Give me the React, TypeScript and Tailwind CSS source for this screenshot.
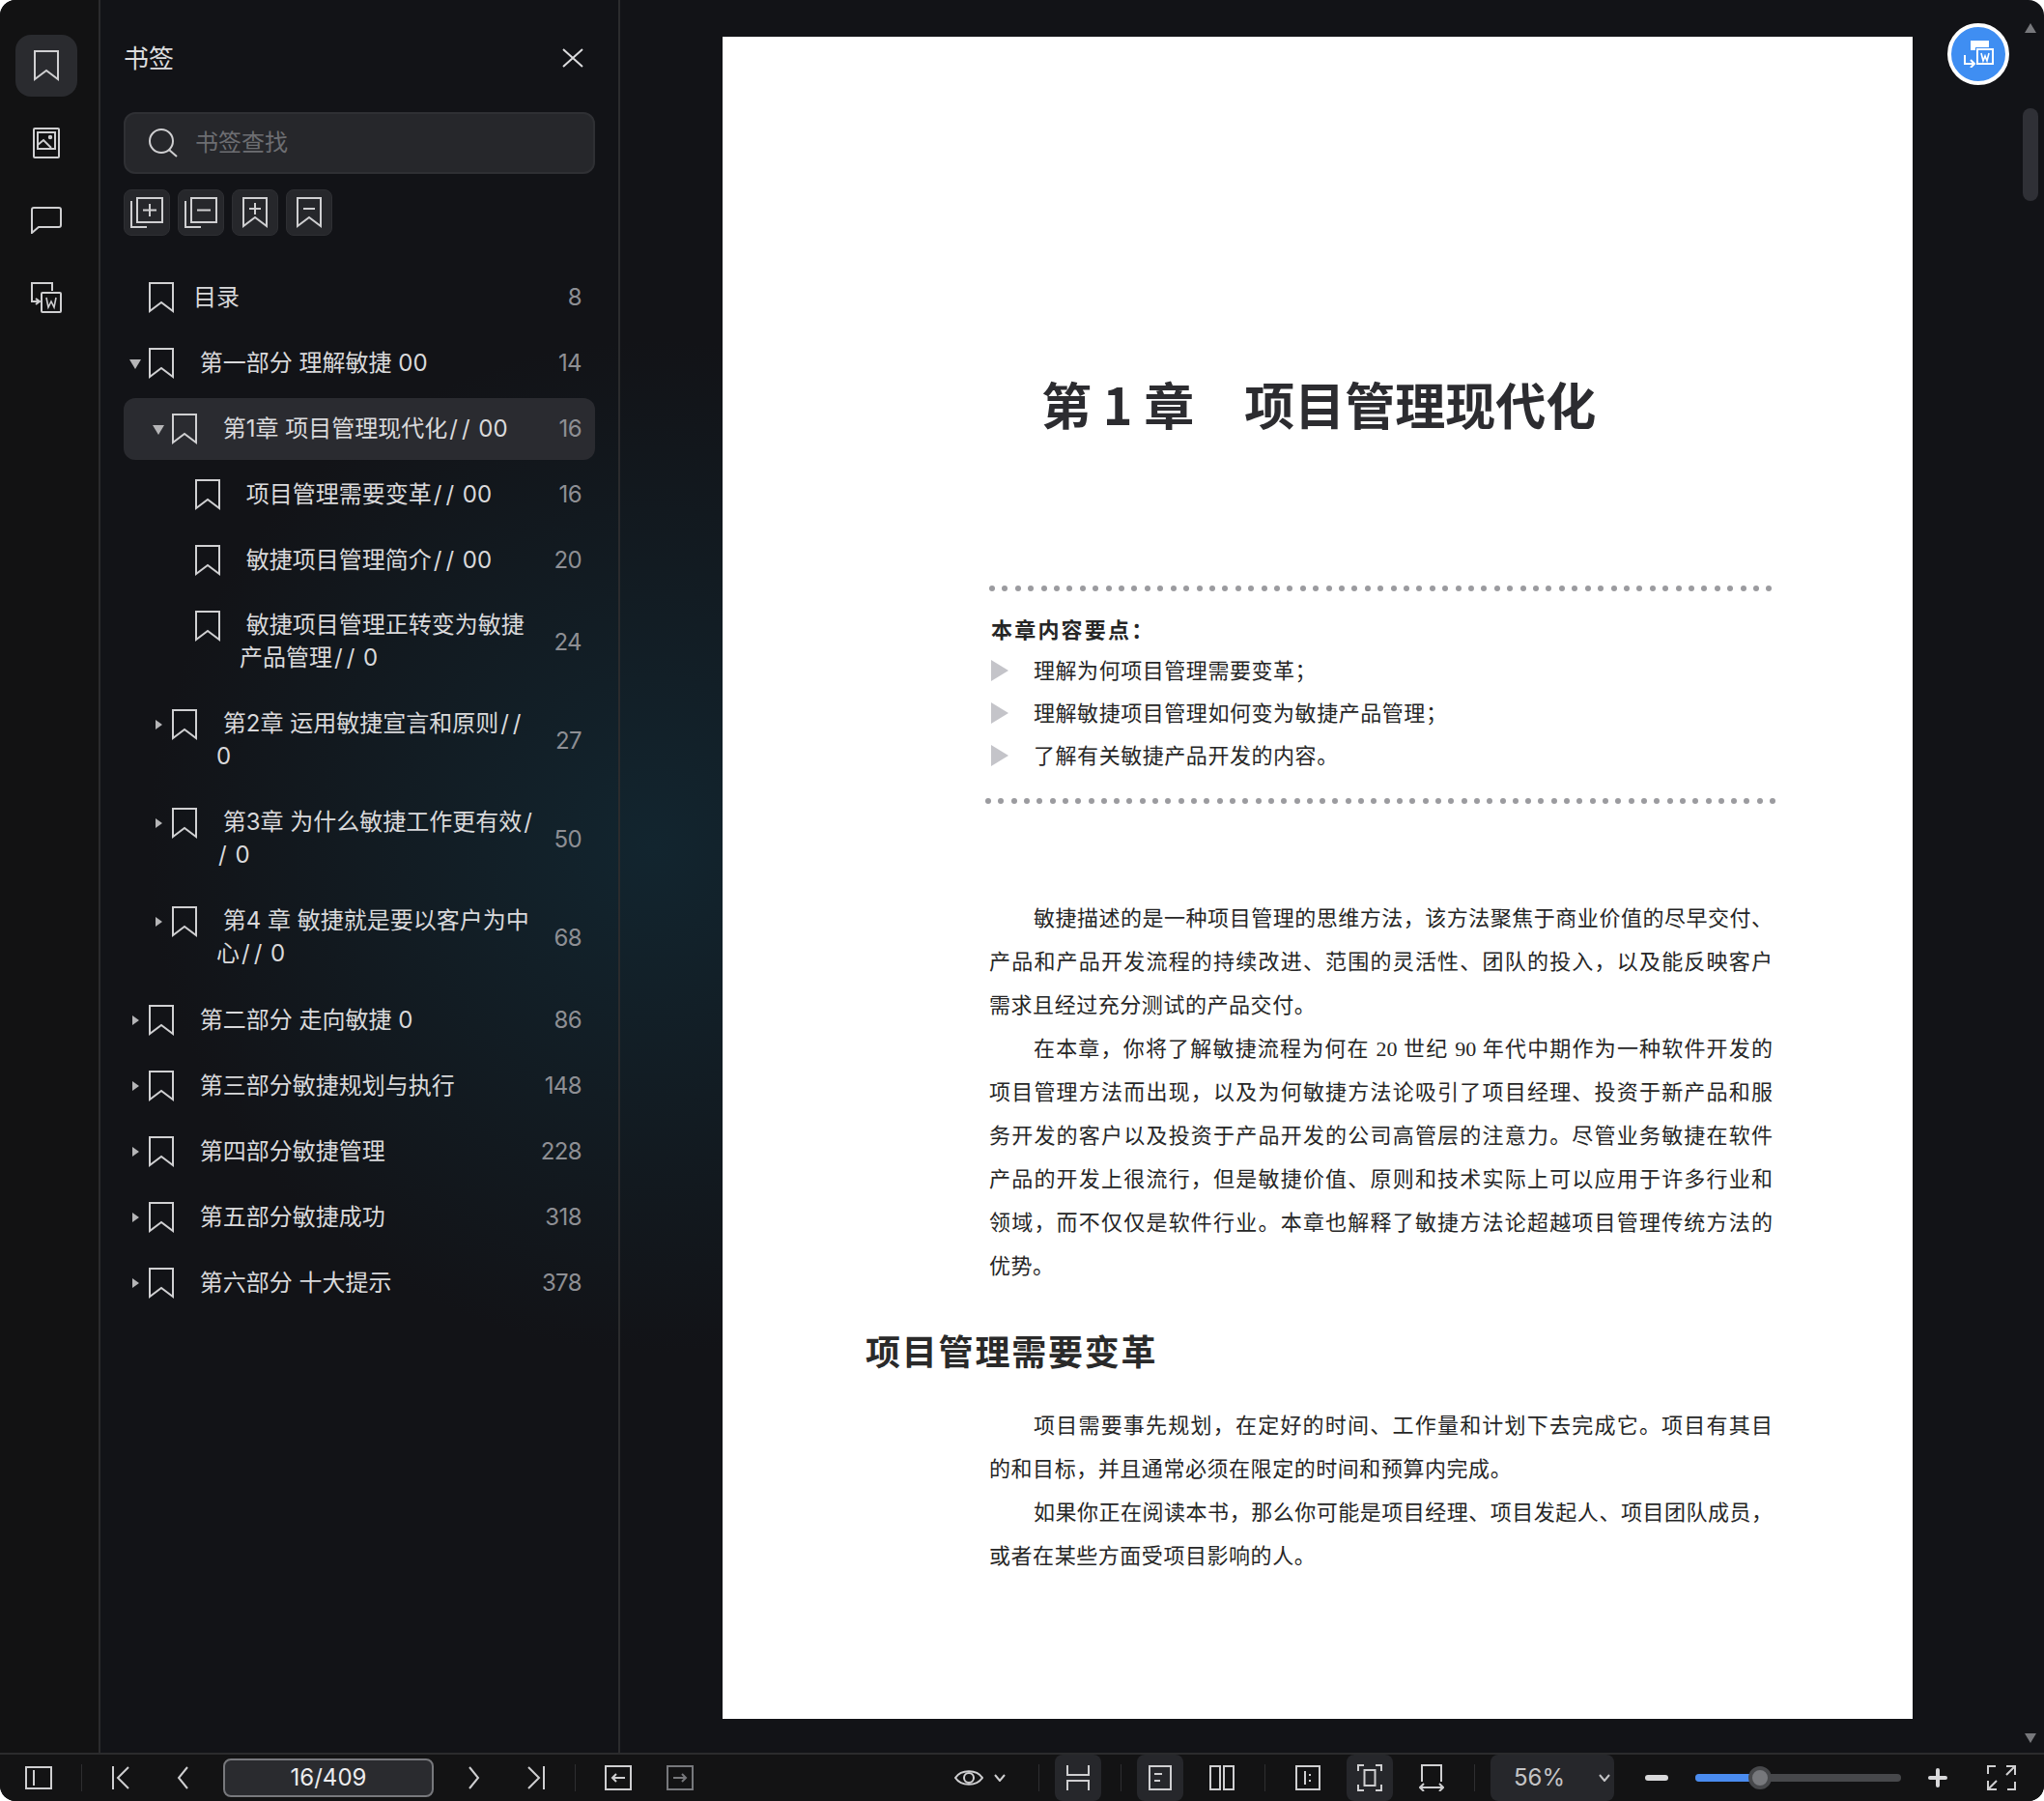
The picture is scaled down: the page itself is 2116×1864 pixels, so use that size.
import type { ReactNode } from "react";

type Row = {
  level: 0 | 1 | 2;
  caret?: "open" | "closed";
  text: string;
  page: string;
  selected?: boolean;
  multi?: boolean;
};

const ROWS: Row[] = [
  { level: 0, text: "目录", page: "8" },
  { level: 0, caret: "open", text: " 第一部分 理解敏捷 00", page: "14" },
  { level: 1, caret: "open", text: " 第1章 项目管理现代化// 00", page: "16", selected: true },
  { level: 2, text: " 项目管理需要变革// 00", page: "16" },
  { level: 2, text: " 敏捷项目管理简介// 00", page: "20" },
  { level: 2, text: " 敏捷项目管理正转变为敏捷\n产品管理// 0", page: "24", multi: true },
  { level: 1, caret: "closed", text: " 第2章 运用敏捷宣言和原则//\n0", page: "27", multi: true },
  { level: 1, caret: "closed", text: " 第3章 为什么敏捷工作更有效/\n/ 0", page: "50", multi: true },
  { level: 1, caret: "closed", text: " 第4 章 敏捷就是要以客户为中\n心// 0", page: "68", multi: true },
  { level: 0, caret: "closed", text: " 第二部分 走向敏捷 0", page: "86" },
  { level: 0, caret: "closed", text: " 第三部分敏捷规划与执行", page: "148" },
  { level: 0, caret: "closed", text: " 第四部分敏捷管理", page: "228" },
  { level: 0, caret: "closed", text: " 第五部分敏捷成功", page: "318" },
  { level: 0, caret: "closed", text: " 第六部分 十大提示", page: "378" },
];

const INDENT = ["pl-1.5", "pl-7.5", "pl-13.5"];

const PARA_ONE = [
  "敏捷描述的是一种项目管理的思维方法，该方法聚焦于商业价值的尽早交付、",
  "产品和产品开发流程的持续改进、范围的灵活性、团队的投入，以及能反映客户",
];
const PARA_TWO = [
  "在本章，你将了解敏捷流程为何在 20 世纪 90 年代中期作为一种软件开发的",
  "项目管理方法而出现，以及为何敏捷方法论吸引了项目经理、投资于新产品和服",
  "务开发的客户以及投资于产品开发的公司高管层的注意力。尽管业务敏捷在软件",
  "产品的开发上很流行，但是敏捷价值、原则和技术实际上可以应用于许多行业和",
  "领域，而不仅仅是软件行业。本章也解释了敏捷方法论超越项目管理传统方法的",
];

function Icon({ w, h, children, className }: { w: number; h: number; children: ReactNode; className?: string }) {
  return (
    <svg
      width={w}
      height={h}
      viewBox={`0 0 ${w} ${h}`}
      fill="none"
      stroke="currentColor"
      strokeWidth={2}
      className={className}
    >
      {children}
    </svg>
  );
}

function Bookmark({ w = 26, h = 32 }: { w?: number; h?: number }) {
  return (
    <Icon w={w} h={h} className="shrink-0 text-[#d0d0d2]">
      <path d={`M1 1H${w - 1}V${h - 2}L${w / 2} ${h - 11}L1 ${h - 2}Z`} />
    </Icon>
  );
}

function Caret({ open }: { open: boolean }) {
  return (
    <svg width={12} height={12} viewBox="0 0 12 12" className="shrink-0 text-[#b5b5b7]" fill="currentColor">
      {open ? <path d="M0 2H12L6 12Z" /> : <path d="M3 1L10 6L3 11Z" />}
    </svg>
  );
}

function Rail() {
  return (
    <aside className="flex w-[104px] shrink-0 flex-col gap-4 border-r-2 border-[#2b2b2d] bg-[#121213] pt-9 pl-4 text-[#cfcfd1]">
      <div className="flex h-16 w-16 items-center justify-center rounded-2xl bg-[#2a2b2f]">
        <Bookmark w={26} h={32} />
      </div>
      <div className="flex h-16 w-16 items-center justify-center">
        <Icon w={28} h={32}>
          <rect x="1" y="1" width="26" height="30" rx="1" />
          <rect x="5" y="5" width="18" height="17" />
          <path d="M5 18L11 13L19 21" />
          <circle cx="18" cy="10" r="1.2" />
        </Icon>
      </div>
      <div className="flex h-16 w-16 items-center justify-center">
        <Icon w={32} h={28}>
          <path d="M1 27V3Q1 1 3 1H29Q31 1 31 3V19Q31 21 29 21H8Z" />
        </Icon>
      </div>
      <div className="flex h-16 w-16 items-center justify-center">
        <Icon w={32} h={32}>
          <path d="M22 9V1H1V20H9M5 17L9 20L5 23" />
          <rect x="11" y="11" width="20" height="20" rx="1" />
          <path d="M16 16L18 26L21 20L24 26L26 16" strokeWidth={1.6} />
        </Icon>
      </div>
    </aside>
  );
}

function ToolButton({ children }: { children: ReactNode }) {
  return (
    <button className="flex h-12 w-12 items-center justify-center rounded-lg border border-[#2e2f33] bg-[#26272b] text-[#cfcfd1]">
      {children}
    </button>
  );
}

// one block per line; the slashes sit wider in the reference than in Inter
function RowText({ text }: { text: string }) {
  return (
    <>
      {text.split("\n").map((line, l) => (
        <span key={l} className="block">
          {line.split(/(\/)/).map((part, i) =>
            part === "/" ? (
              <span key={i} className="px-0.5">
                /
              </span>
            ) : (
              part
            ),
          )}
        </span>
      ))}
    </>
  );
}

function Sidebar() {
  return (
    <aside className="flex w-[538px] shrink-0 flex-col border-r-2 border-[#2b2b2d] pt-10 pr-6 pl-6">
      <header className="flex h-10 items-center justify-between">
        <h2 className="text-[26px] text-[#dcdcde]">书签</h2>
        <Icon w={22} h={20} className="mr-3 text-[#dcdcde]">
          <path d="M1 1L21 19M21 1L1 19" />
        </Icon>
      </header>
      <div className="mt-9 flex h-16 items-center rounded-xl border-2 border-[#2f3034] bg-[#26272b] pl-6">
        <Icon w={30} h={30} className="text-[#cfcfd1]">
          <circle cx="13" cy="13" r="12" />
          <path d="M21 22L29 29" />
        </Icon>
        <span className="ml-4.5 text-2xl text-[#6d6e72]">书签查找</span>
      </div>
      <div className="mt-4 flex gap-2">
        <ToolButton>
          <Icon w={34} h={32}>
            <rect x="7" y="1" width="26" height="25" />
            <path d="M1 4V31H17M20 7V20M13 13.5H27" />
          </Icon>
        </ToolButton>
        <ToolButton>
          <Icon w={34} h={32}>
            <rect x="7" y="1" width="26" height="25" />
            <path d="M1 4V31H17M13 13.5H27" />
          </Icon>
        </ToolButton>
        <ToolButton>
          <Icon w={26} h={32}>
            <path d="M1 1H25V30L13 21L1 30ZM13 6V18M7 12H19" />
          </Icon>
        </ToolButton>
        <ToolButton>
          <Icon w={26} h={32}>
            <path d="M1 1H25V30L13 21L1 30ZM7 12H19" />
          </Icon>
        </ToolButton>
      </div>
      <ul className="mt-8 flex flex-col gap-1">
        {ROWS.map((row) => (
          <li
            key={row.text}
            className={`flex text-2xl text-[#d9d9db] ${INDENT[row.level]} ${
              row.multi ? "items-start pt-4 pb-4" : "h-16 items-center"
            } ${row.selected ? "rounded-xl bg-[#2a2b30]" : ""}`}
          >
            <span className="mr-2 flex h-8 w-3 items-center">
              {row.caret && <Caret open={row.caret === "open"} />}
            </span>
            <Bookmark />
            <span
              className={`ml-5 flex-1 whitespace-pre-wrap ${row.multi ? "-mt-0.5 leading-[34px]" : "leading-8"}`}
            >
              <RowText text={row.text} />
            </span>
            <span className={`shrink-0 pr-3.5 tracking-tight text-[#8e8f94] ${row.multi ? "self-center" : ""}`}>
              {row.page}
            </span>
          </li>
        ))}
      </ul>
    </aside>
  );
}

function DotLine({ count, className }: { count: number; className?: string }) {
  return (
    <div className={`flex justify-between ${className ?? ""}`}>
      {Array.from({ length: count }, (_, i) => (
        <span key={i} className="size-1.5 rounded-full bg-[#9b9b9f]" />
      ))}
    </div>
  );
}

function Line({ children, indent }: { children: ReactNode; indent?: boolean }) {
  return (
    <p className={`text-justify [text-align-last:justify] ${indent ? "pl-11.5" : ""}`}>{children}</p>
  );
}

function Bullet({ children }: { children: ReactNode }) {
  return (
    <div className="flex h-11 items-center">
      <svg width={18} height={22} viewBox="0 0 18 22" className="ml-0.5 text-[#c4c4c9]" fill="currentColor">
        <path d="M0 0L18 11L0 22Z" />
      </svg>
      <span className="ml-6.5 tracking-wide">{children}</span>
    </div>
  );
}

function Page() {
  return (
    <article className="ml-[106px] mt-[38px] flex h-[1741px] w-[1232px] flex-col bg-white pt-84 pr-[145px] pl-[276px] font-['Liberation_Serif','Noto_Sans_CJK_SC',serif] text-[22px] leading-[45px] text-[#262626]">
      <h1 className="ml-[54px] flex h-22 items-center whitespace-pre font-['Noto_Sans_CJK_SC',sans-serif] text-[52px] leading-none font-bold text-[#2c2c30]">
        第 1 章<span className="ml-13">项目管理现代化</span>
      </h1>
      <DotLine count={61} className="mt-36" />
      <div className="mt-4 ml-0.5 flex h-11 items-center pt-1 font-bold tracking-widest">本章内容要点：</div>
      <Bullet>理解为何项目管理需要变革；</Bullet>
      <Bullet>理解敏捷项目管理如何变为敏捷产品管理；</Bullet>
      <Bullet>了解有关敏捷产品开发的内容。</Bullet>
      <DotLine count={62} className="mt-5.5 -mx-1" />
      <div className="mt-24">
        <Line indent>{PARA_ONE[0]}</Line>
        <Line>{PARA_ONE[1]}</Line>
        <p className="tracking-wide">需求且经过充分测试的产品交付。</p>
        <Line indent>{PARA_TWO[0]}</Line>
        <Line>{PARA_TWO[1]}</Line>
        <Line>{PARA_TWO[2]}</Line>
        <Line>{PARA_TWO[3]}</Line>
        <Line>{PARA_TWO[4]}</Line>
        <p className="tracking-wide">优势。</p>
      </div>
      <h2 className="-ml-32 mt-8 flex h-16 items-center font-['Noto_Sans_CJK_SC',sans-serif] text-4xl font-bold tracking-wider text-[#2a2a2a]">
        项目管理需要变革
      </h2>
      <div className="mt-6">
        <Line indent>项目需要事先规划，在定好的时间、工作量和计划下去完成它。项目有其目</Line>
        <p className="tracking-wide">的和目标，并且通常必须在限定的时间和预算内完成。</p>
        <Line indent>如果你正在阅读本书，那么你可能是项目经理、项目发起人、项目团队成员，</Line>
        <p className="tracking-wide">或者在某些方面受项目影响的人。</p>
      </div>
    </article>
  );
}

function Main() {
  return (
    <main className="relative flex-1">
      <Page />
      <button className="absolute top-6 right-9 flex size-16 items-center justify-center rounded-full border-4 border-white bg-[#3f8ef2]">
        <svg width={32} height={28} viewBox="0 0 32 28" fill="none" className="text-white">
          <path d="M8 0H27V7H13V10H8Z" fill="currentColor" />
          <rect x="15" y="9" width="16" height="15" stroke="currentColor" strokeWidth={2} />
          <path d="M19 13L21 21L23 16L25 21L27 13" stroke="currentColor" strokeWidth={1.6} />
          <path d="M2 15V24H11M8 20L12 24L8 28" stroke="currentColor" strokeWidth={2} />
        </svg>
      </button>
      <svg width={12} height={10} viewBox="0 0 12 10" className="absolute top-6 right-2 text-[#77787c]" fill="currentColor">
        <path d="M6 0L12 10H0Z" />
      </svg>
      <div className="absolute top-28 right-1.5 h-24 w-4 rounded-full bg-[#2f3036]" />
      <svg width={12} height={10} viewBox="0 0 12 10" className="absolute right-2 bottom-2.5 text-[#77787c]" fill="currentColor">
        <path d="M6 10L12 0H0Z" />
      </svg>
    </main>
  );
}

function Sep({ className }: { className?: string }) {
  return <span className={`h-7 w-px shrink-0 bg-[#2e2e30] ${className ?? ""}`} />;
}

function BarIcon({
  children,
  className,
  tile,
}: {
  children: ReactNode;
  className?: string;
  tile?: boolean;
}) {
  return (
    <div
      className={`flex h-full w-12 shrink-0 items-center justify-center rounded-lg ${
        tile ? "bg-[#26272b]" : ""
      } ${className ?? ""}`}
    >
      {children}
    </div>
  );
}

function BottomBar() {
  return (
    <footer className="flex h-[50px] shrink-0 items-center border-t-2 border-[#2b2b2d] bg-[#131314] pr-5 pl-6 text-[#cfcfd1]">
      <div className="flex w-8 justify-center">
        <Icon w={28} h={24}>
          <rect x="1" y="1" width="26" height="22" />
          <path d="M9 4V20" />
        </Icon>
      </div>
      <Sep className="ml-7" />
      <BarIcon className="ml-4">
        <Icon w={18} h={24}>
          <path d="M1 0V24M17 1L6 12L17 23" />
        </Icon>
      </BarIcon>
      <BarIcon className="ml-4">
        <Icon w={12} h={24}>
          <path d="M11 1L2 12L11 23" />
        </Icon>
      </BarIcon>
      <div className="ml-4.5 flex h-10 w-[218px] items-center justify-center rounded-lg border-2 border-[#77787c] bg-[#2a2b2f] text-2xl text-[#ececee]">
        16/409
      </div>
      <BarIcon className="ml-4.5">
        <Icon w={12} h={24}>
          <path d="M1 1L10 12L1 23" />
        </Icon>
      </BarIcon>
      <BarIcon className="ml-4">
        <Icon w={18} h={24}>
          <path d="M17 0V24M1 1L12 12L1 23" />
        </Icon>
      </BarIcon>
      <Sep className="ml-4" />
      <BarIcon className="ml-5">
        <Icon w={28} h={26}>
          <rect x="1" y="1" width="26" height="24" />
          <path d="M21 13H8M12 9L8 13L12 17" />
        </Icon>
      </BarIcon>
      <BarIcon className="ml-4 text-[#77787c]">
        <Icon w={28} h={26}>
          <rect x="1" y="1" width="26" height="24" />
          <path d="M7 13H20M16 9L20 13L16 17" />
        </Icon>
      </BarIcon>

      <div className="ml-auto flex h-full items-center">
        <div className="flex w-8 justify-center">
          <Icon w={30} h={24}>
            <path d="M1 12C7 3 23 3 29 12C23 21 7 21 1 12Z" />
            <circle cx="15" cy="12" r="5" />
          </Icon>
        </div>
        <div className="ml-2 flex w-4 justify-center">
          <Icon w={12} h={8}>
            <path d="M1 1L6 7L11 1" />
          </Icon>
        </div>
        <Sep className="ml-8" />
        <BarIcon tile className="ml-4">
          <Icon w={24} h={26}>
            <path d="M1 0V10H23V0M1 26V16H23V26" />
          </Icon>
        </BarIcon>
        <Sep className="ml-5" />
        <BarIcon tile className="ml-4">
          <Icon w={24} h={26}>
            <rect x="1" y="1" width="22" height="24" />
            <path d="M6 9H14M6 16H12" />
          </Icon>
        </BarIcon>
        <BarIcon className="ml-4">
          <Icon w={26} h={26}>
            <rect x="1" y="1" width="10" height="24" />
            <rect x="15" y="1" width="10" height="24" />
          </Icon>
        </BarIcon>
        <Sep className="ml-5" />
        <BarIcon className="ml-5">
          <Icon w={26} h={26}>
            <rect x="1" y="1" width="24" height="24" />
            <path d="M10 6V20M15 9V11M15 15V17" />
          </Icon>
        </BarIcon>
        <BarIcon tile className="ml-4">
          <Icon w={26} h={28}>
            <path d="M1 7V1H7M19 1H25V7M25 21V27H19M7 27H1V21" />
            <rect x="7.5" y="6" width="11" height="16" />
          </Icon>
        </BarIcon>
        <BarIcon className="ml-4">
          <Icon w={26} h={28}>
            <path d="M3 18V1H23V18" />
            <path d="M1 24H25M5 20L1 24L5 28M21 20L25 24L21 28" />
          </Icon>
        </BarIcon>
        <Sep className="ml-5" />
        <div className="ml-4 flex h-full w-32 shrink-0 items-center rounded-lg bg-[#26272b] pl-6 text-2xl text-[#c4c4c6]">
          56%
          <Icon w={12} h={8} className="ml-auto mr-1">
            <path d="M1 1L6 7L11 1" />
          </Icon>
        </div>
        <BarIcon className="ml-5">
          <span className="h-1.5 w-6 rounded-full bg-[#d9d9db]" />
        </BarIcon>
        <div className="relative ml-4 h-2 w-[213px] shrink-0 rounded-full bg-[#47484b]">
          <div className="h-full w-[61px] rounded-full bg-[#4a8cf0]" />
          <span className="absolute top-1/2 left-[55px] size-6 -translate-y-1/2 rounded-full border-4 border-[#47484b] bg-[#77787c]" />
        </div>
        <BarIcon className="ml-3.5">
          <span className="relative block size-5">
            <span className="absolute top-2 left-0 h-1 w-5 rounded-full bg-[#d9d9db]" />
            <span className="absolute top-0 left-2 h-5 w-1 rounded-full bg-[#d9d9db]" />
          </span>
        </BarIcon>
        <BarIcon className="ml-4.5">
          <Icon w={30} h={26}>
            <path d="M1 9V1H9M29 17V25H21M20 1H29V10M29 1L20 10M1 16V25H10M1 25L10 16" />
          </Icon>
        </BarIcon>
      </div>
    </footer>
  );
}

export default function App() {
  return (
    <div className="h-[1864px] w-[2116px] bg-white font-['Inter','Noto_Sans_CJK_SC',sans-serif]">
      <div className="flex h-full flex-col overflow-hidden rounded-2xl bg-radial-[circle_at_32%_47%] from-[#12252f] to-[#121317] to-30%">
        <div className="flex min-h-0 flex-1">
          <Rail />
          <Sidebar />
          <Main />
        </div>
        <BottomBar />
      </div>
    </div>
  );
}
